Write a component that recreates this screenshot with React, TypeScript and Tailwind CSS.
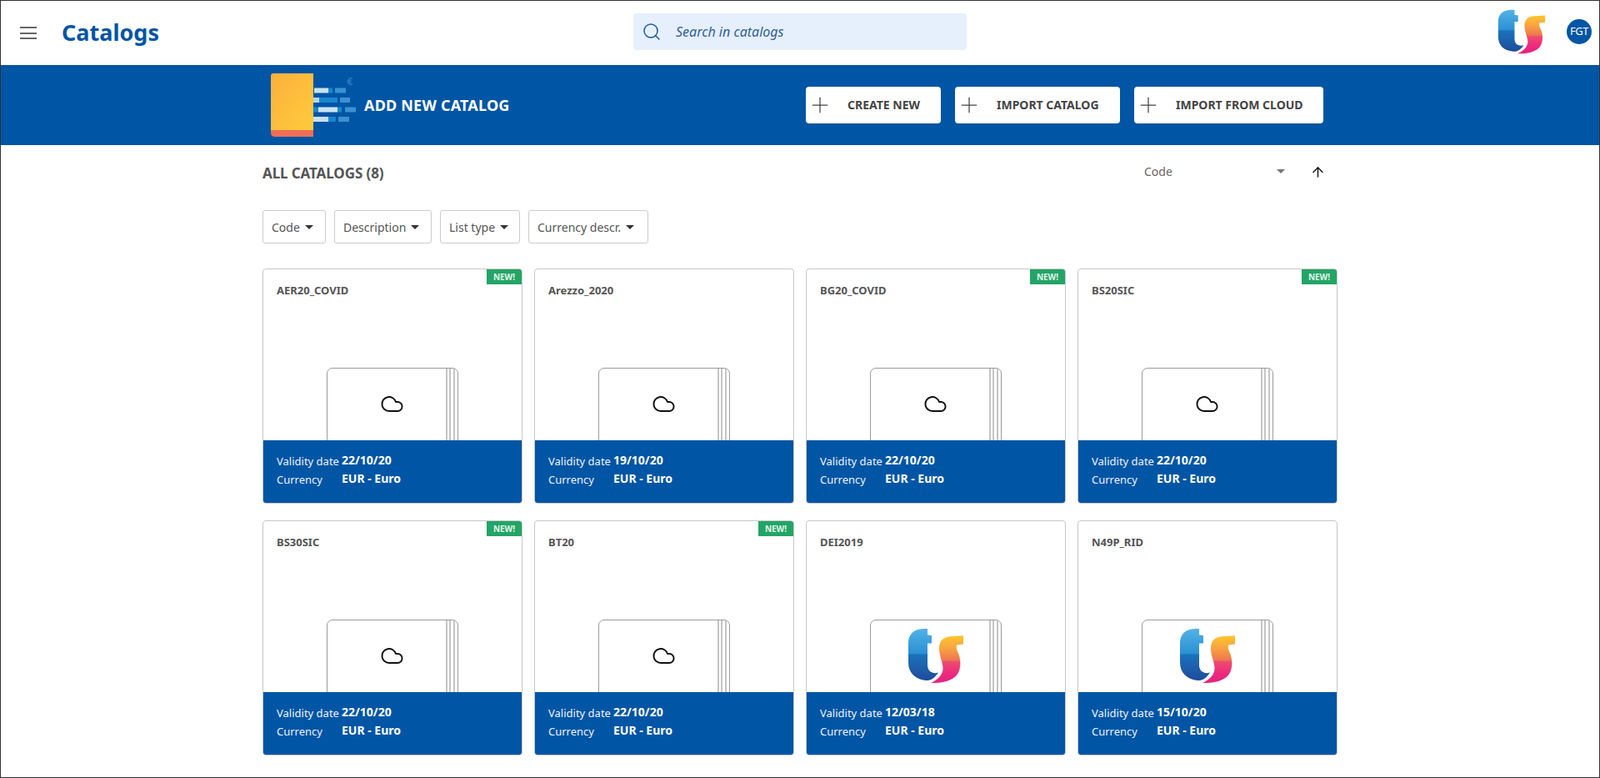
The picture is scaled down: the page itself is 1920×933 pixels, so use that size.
import { useId } from "react";
import { ArrowUp, Cloud, Plus, Search } from "lucide-react";

type Catalog = {
  code: string;
  date: string;
  isNew?: boolean;
  logo?: boolean;
};

const catalogs: Catalog[] = [
  { code: "AER20_COVID", date: "22/10/20", isNew: true },
  { code: "Arezzo_2020", date: "19/10/20" },
  { code: "BG20_COVID", date: "22/10/20", isNew: true },
  { code: "BS20SIC", date: "22/10/20", isNew: true },
  { code: "BS30SIC", date: "22/10/20", isNew: true },
  { code: "BT20", date: "22/10/20", isNew: true },
  { code: "DEI2019", date: "12/03/18", logo: true },
  { code: "N49P_RID", date: "15/10/20", logo: true },
];

const filters = [
  { label: "Code", width: "w-[76px]" },
  { label: "Description", width: "w-[117px]" },
  { label: "List type", width: "w-[96px]" },
  { label: "Currency descr.", width: "w-[144px]" },
];

const actions = [
  { label: "CREATE NEW", width: "w-[162px]" },
  { label: "IMPORT CATALOG", width: "w-[198px]" },
  { label: "IMPORT FROM CLOUD", width: "w-[227px]" },
];

const Logo = ({ className }: { className: string }) => {
  const id = useId();
  return (
    <svg viewBox="5 6 68 65" preserveAspectRatio="none" className={className}>
      <defs>
        <linearGradient id={`${id}t`} x1="0" y1="0" x2="0" y2="1">
          <stop offset="0" stopColor="#52b3e6" />
          <stop offset="0.48" stopColor="#2b90d4" />
          <stop offset="0.5" stopColor="#1b72bb" />
          <stop offset="1" stopColor="#1f4c9b" />
        </linearGradient>
        <linearGradient id={`${id}s`} x1="0" y1="0" x2="0" y2="1">
          <stop offset="0" stopColor="#fec62d" />
          <stop offset="0.25" stopColor="#f9a53f" />
          <stop offset="0.52" stopColor="#ee7650" />
          <stop offset="0.55" stopColor="#ee4c6e" />
          <stop offset="0.8" stopColor="#ec2a7e" />
          <stop offset="1" stopColor="#e8207f" />
        </linearGradient>
      </defs>
      <path
        d="M6 24 C6 13 13 7 25 7 L29 7 L29 14 L34 15 L34 24 L29 24 L29 49 C29 56 34 60 42 58 C38 64 33 68 27 67 C14 66 6 58 6 46 Z"
        fill={`url(#${id}t)`}
      />
      <path
        d="M72 15 L72 25 L64 26 C63 30 65 33 67 38 C69 45 69 52 66 58 C62 66 50 71 33 70 C42 66 48 60 47.5 52 C47 45 43 38 43 30 C43 21 48 17 56 16 Z"
        fill={`url(#${id}s)`}
      />
    </svg>
  );
};

const AddCatalogIcon = () => (
  <svg viewBox="0 0 105 76" className="h-[76px] w-[105px] shrink-0 overflow-visible">
    <defs>
      <linearGradient id="bookFill" x1="0" y1="0" x2="1" y2="1">
        <stop offset="0" stopColor="#fbb03b" />
        <stop offset="1" stopColor="#ffcb3d" />
      </linearGradient>
    </defs>
    <path d="M3 0 H51 V68 H0 V3 Q0 0 3 0 Z" fill="url(#bookFill)" />
    <path d="M0 68 H51 V76 H5 Q0 76 0 71 Z" fill="#ee6f55" />
    <rect x="52" y="17.5" width="17" height="6" fill="#c9e0f3" />
    <rect x="69" y="17.5" width="5" height="6" fill="#1a86cf" />
    <rect x="77" y="17.5" width="13" height="6" fill="#3a92d2" />
    <rect x="51" y="29" width="7" height="6" fill="#b7d6ee" />
    <rect x="58" y="29" width="22" height="6" fill="#1a86cf" />
    <rect x="83" y="29" width="12" height="6" fill="#3a92d2" />
    <rect x="51" y="40.5" width="6" height="6" fill="#1a86cf" />
    <rect x="57" y="40.5" width="23" height="6" fill="#cfe3f4" />
    <rect x="80" y="40.5" width="5" height="6" fill="#1a86cf" />
    <rect x="89" y="40.5" width="13" height="6" fill="#3a92d2" />
    <rect x="51" y="52" width="18" height="6" fill="#c9e0f3" />
    <rect x="69" y="52" width="9" height="6" fill="#1a86cf" />
    <rect x="81" y="52" width="13" height="6" fill="#3a92d2" />
    <text x="91" y="13.5" fontSize="13" fontWeight="700" fill="#2a78bf" fontFamily="'Open Sans', sans-serif">
      €
    </text>
  </svg>
);

const Caret = () => (
  <span className="ml-[6px] h-0 w-0 border-x-[5px] border-t-[5px] border-x-transparent border-t-[#333]" />
);

const CatalogCard = ({ catalog }: { catalog: Catalog }) => (
  <div className="relative flex h-[282px] flex-col overflow-hidden rounded-[4px] border border-[#c8c8c8] bg-white">
    {catalog.isNew && (
      <div className="absolute right-0 top-0 flex h-[18px] w-[42px] items-center justify-center bg-[#23a566] text-[10px] font-bold text-[#e4f5ec]">
        NEW!
      </div>
    )}
    <p className="ml-[16px] mt-[15px] text-[13px] font-bold leading-[20px] text-[#555555]">{catalog.code}</p>

    {/* Book */}
    <div className="absolute left-[76px] top-[118px] flex h-[120px] w-[158px] items-start justify-end rounded-t-[7px] border border-[#9a9a9a] bg-white">
      <div className="h-full w-[4px] border-l-[2px] border-[#c4c4c4]" />
      <div className="h-full w-[5px] border-l-[2px] border-[#c4c4c4]" />
      <div className="h-full w-[5px] border-l-[2px] border-[#c4c4c4]" />
    </div>
    {catalog.logo ? (
      <Logo className="absolute left-[121px] top-[128px] h-[67px] w-[68px]" />
    ) : (
      <Cloud size={29} strokeWidth={1.6} color="#111111" className="absolute left-[140px] top-[147px]" />
    )}

    {/* Footer */}
    <div className="absolute bottom-0 left-0 right-0 h-[75px] bg-[#0055a5] pl-[16px] pt-[14px] text-white">
      <div className="flex h-[22px] items-center">
        <span className="w-[78px] text-[13px] leading-[22px] text-[#eef4fa]">Validity date</span>
        <span className="-mt-[2px] text-[14px] font-bold leading-[22px]">{catalog.date}</span>
      </div>
      <div className="flex h-[22px] items-center">
        <span className="w-[78px] text-[13px] leading-[22px] text-[#eef4fa]">Currency</span>
        <span className="-mt-[2px] text-[14px] font-bold leading-[22px]">EUR - Euro</span>
      </div>
    </div>
  </div>
);

const App = () => {
  return (
    <div className="relative h-[933px] w-full overflow-hidden border border-[#333333] bg-white font-['Open_Sans',sans-serif]">
      {/* Top bar */}
      <header className="relative flex h-[77px] items-center">
        <div className="ml-[23px] flex h-[15px] w-[20px] flex-col justify-between">
          <span className="h-[2px] bg-[#666666]" />
          <span className="h-[2px] bg-[#666666]" />
          <span className="h-[2px] bg-[#666666]" />
        </div>
        <h1 className="-mt-[2px] ml-[30px] text-[27px] font-bold leading-none text-[#0055a5]">Catalogs</h1>

        <div className="absolute left-[759px] top-[15px] flex h-[44px] w-[400px] items-center rounded-[4px] bg-[#e6effc]">
          <Search size={24} strokeWidth={1.5} color="#1f5c9c" className="ml-[10px]" />
          <span className="ml-[17px] text-[16px] italic text-[#2f5f98]">Search in catalogs</span>
        </div>

        <Logo className="absolute left-[1796px] top-[10px] h-[54px] w-[58px]" />
        <div className="absolute left-[1879px] top-[22px] flex h-[30px] w-[30px] items-center justify-center rounded-full bg-[#0055a5] text-[13px] tracking-[-0.5px] text-white">
          FGT
        </div>
      </header>

      {/* Add new catalog band */}
      <section className="relative flex h-[96px] items-center bg-[#0055a5] pl-[324px]">
        <AddCatalogIcon />
        <span className="ml-[7px] text-[18px] font-bold tracking-[0.2px] text-white">ADD NEW CATALOG</span>
        <div className="absolute left-[966px] top-[26px] flex gap-[17px]">
          {actions.map((action) => (
            <button
              key={action.label}
              className={`flex h-[44px] items-center rounded-[4px] bg-white pl-[5px] text-[14px] font-bold leading-[20px] text-[#444444] ${action.width}`}
            >
              <Plus size={24} strokeWidth={1} color="#444444" className="scale-125" />
              <span className="-mt-[1px] ml-[21px] whitespace-nowrap">{action.label}</span>
            </button>
          ))}
        </div>
      </section>

      {/* Catalog list */}
      <main className="relative pl-[314px]">
        <h2 className="absolute left-[314px] top-[22px] text-[17px] font-bold leading-[24px] tracking-[-0.1px] text-[#555555]">
          ALL CATALOGS (8)
        </h2>

        <div className="absolute left-[1372px] top-[20px] flex h-[22px] w-[169px] items-center justify-between">
          <span className="text-[14px] text-[#666666]">Code</span>
          <span className="h-0 w-0 border-x-[5px] border-t-[5px] border-x-transparent border-t-[#777777]" />
        </div>
        <ArrowUp size={19} strokeWidth={1.8} color="#111111" className="absolute left-[1571px] top-[23px]" />

        <div className="flex gap-[10px] pt-[78px]">
          {filters.map((filter) => (
            <div
              key={filter.label}
              className={`flex h-[40px] items-center rounded-[3px] border border-[#cccccc] pl-[10px] text-[14px] text-[#555555] ${filter.width}`}
            >
              {filter.label}
              <Caret />
            </div>
          ))}
        </div>

        <div className="mt-[30px] grid w-[1290px] grid-cols-4 gap-x-[14px] gap-y-[20px]">
          {catalogs.map((catalog) => (
            <CatalogCard key={catalog.code} catalog={catalog} />
          ))}
        </div>
      </main>
    </div>
  );
};

export default App;
